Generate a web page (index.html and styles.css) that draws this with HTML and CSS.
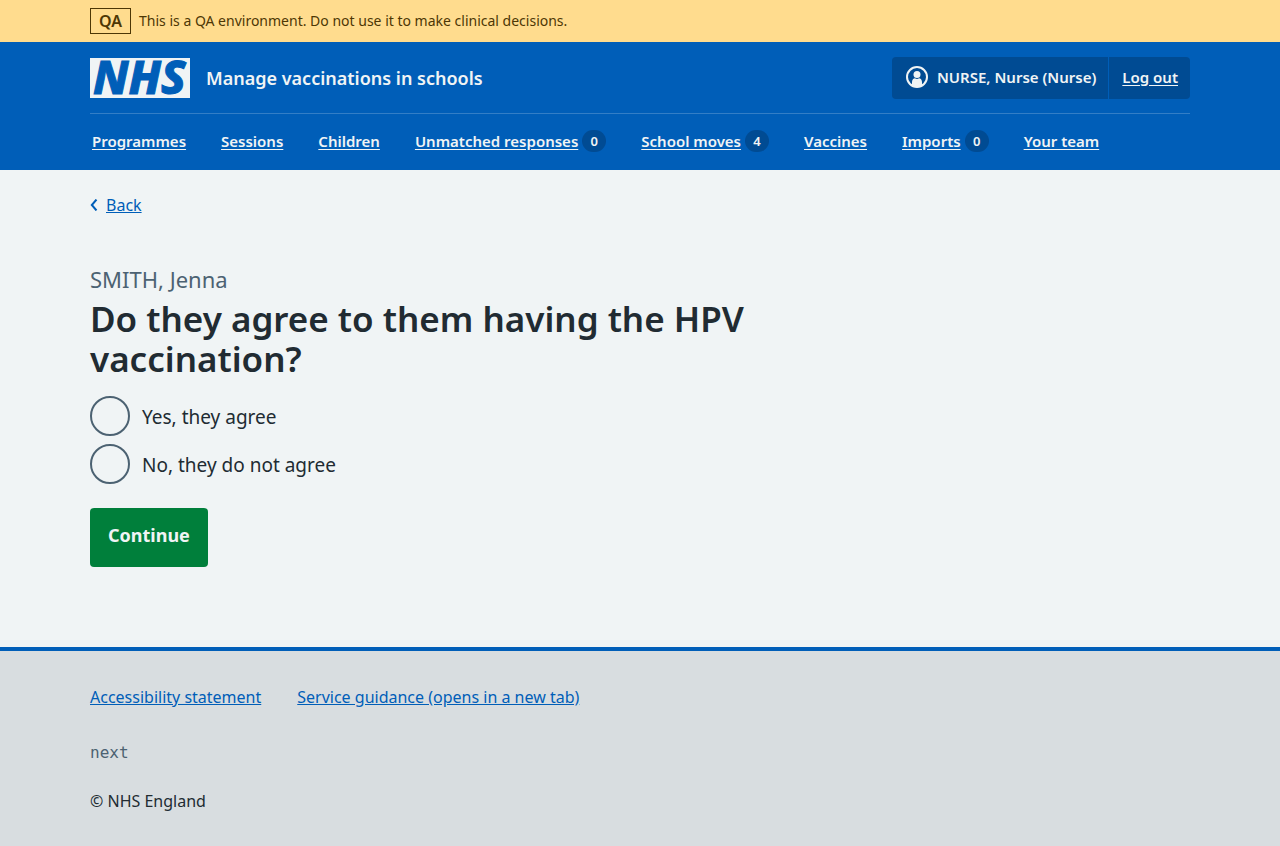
FILE: index.html
```html
<!DOCTYPE html>
<html lang="en">
<head>
<meta charset="utf-8">
<meta name="viewport" content="width=device-width, initial-scale=1">
<title>Do they agree to them having the HPV vaccination? – Manage vaccinations in schools</title>
<link rel="stylesheet" href="styles.css">
</head>
<body>
<div class="environment">
  <div class="container environment-inner">
    <strong class="environment-tag">QA</strong>
    <span>This is a QA environment. Do not use it to make clinical decisions.</span>
  </div>
</div>
<header class="header">
  <div class="container">
    <div class="header-top">
      <a class="service" href="#">
        <svg class="logo" viewBox="0 0 100 40" role="img" aria-label="NHS">
          <rect width="100" height="40" fill="#f0f4f5"/>
          <text class="logo-text" x="3" y="36">NHS</text>
        </svg>
        <span>Manage vaccinations in schools</span>
      </a>
      <div class="account">
        <div class="account-item">
          <svg class="account-icon" viewBox="0 0 24 24" aria-hidden="true">
            <circle cx="12" cy="12" r="10" fill="none" stroke="#f0f4f5" stroke-width="2"/>
            <circle cx="12" cy="9.500" r="3.500" fill="#f0f4f5"/>
            <path d="M7 20.500v-3.500c0-2.500 1.500-3.800 3-3.800 1 .900 3 .900 4 0 1.500 0 3 1.300 3 3.800v3.500c-3 1.700-7 1.700-10 0z" fill="#f0f4f5"/>
          </svg>
          <span>NURSE, Nurse (Nurse)</span>
        </div>
        <div class="account-item"><a href="#">Log out</a></div>
      </div>
    </div>
    <nav aria-label="Primary">
      <ul class="nav">
        <li><a href="#">Programmes</a></li>
        <li><a href="#">Sessions</a></li>
        <li><a href="#">Children</a></li>
        <li><a href="#">Unmatched responses</a><span class="count">0</span></li>
        <li><a href="#">School moves</a><span class="count">4</span></li>
        <li><a href="#">Vaccines</a></li>
        <li><a href="#">Imports</a><span class="count">0</span></li>
        <li><a href="#">Your team</a></li>
      </ul>
    </nav>
  </div>
</header>
<div class="container page">
  <a class="back" href="#">
    <svg class="back-icon" viewBox="0 0 8 12" aria-hidden="true"><path d="M6.500.500 1.800 6l4.700 5.500" fill="none" stroke="currentColor" stroke-width="2"/></svg>
    <span>Back</span>
  </a>
  <main>
    <form class="question">
      <fieldset>
        <legend>
          <span class="caption">SMITH, Jenna</span>
          <h1>Do they agree to them having the HPV vaccination?</h1>
        </legend>
        <div class="radios">
          <div class="radio"><input type="radio" name="agree" id="agree-yes"><label for="agree-yes">Yes, they agree</label></div>
          <div class="radio"><input type="radio" name="agree" id="agree-no"><label for="agree-no">No, they do not agree</label></div>
        </div>
      </fieldset>
      <button type="button" class="button">Continue</button>
    </form>
  </main>
</div>
<footer class="footer">
  <div class="container">
    <ul class="footer-links">
      <li><a href="#">Accessibility statement</a></li>
      <li><a href="#">Service guidance (opens in a new tab)</a></li>
    </ul>
    <p class="version">next</p>
    <p>© NHS England</p>
  </div>
</footer>
</body>
</html>
```
FILE: styles.css
```css
* { box-sizing: border-box; }
body {
  margin: 0;
  min-height: 100vh;
  display: flex;
  flex-direction: column;
  background: #f0f4f5;
  color: #212b32;
  font: 16px/24px "Noto Sans", "Open Sans", sans-serif;
}
ul, p, h1, fieldset, legend { margin: 0; padding: 0; border: 0; }
ul { list-style: none; }
.container { width: calc(100% - 32px); max-width: 1100px; margin: 0 auto; }

.environment { background: #ffdc8e; color: #4d3705; font-size: 14px; }
.environment-inner { display: flex; align-items: center; gap: 8px; padding: 8px 0; }
.environment-tag { border: 1px solid #4d3705; padding: 0 8px; font-size: 16px; font-weight: 600; }

.header { background: #005eb8; color: #f0f4f5; font-weight: 600; font-size: 15px; }
.header a { color: #f0f4f5; }
.header-top {
  display: flex;
  flex-wrap: wrap;
  align-items: center;
  justify-content: space-between;
  padding: 15px 0 14px;
  border-bottom: 1px solid #337ec6;
}
.service { display: flex; align-items: center; gap: 16px; font-size: 18px; text-decoration: none; }
.logo { width: 100px; height: 40px; overflow: visible; }
.logo-text {
  font: italic 800 46px "Noto Sans", sans-serif;
  fill: #005eb8;
  stroke: #005eb8;
  stroke-width: 1px;
}
.account { display: flex; background: #004b93; border-radius: 4px; }
.account-item { display: flex; align-items: center; gap: 8px; padding: 8px 12px 10px 13px; }
.account-item + .account-item { border-left: 1px solid #005eb8; }
.account-icon { width: 24px; height: 24px; }
.nav { display: flex; flex-wrap: wrap; gap: 0 35px; padding: 15px 2px 17px; }
.nav li { display: flex; align-items: center; gap: 4px; }
.header .nav a, .account a { text-underline-offset: 2px; }
.count {
  min-width: 24px;
  border-radius: 12px;
  background: #004b93;
  font-size: 13px;
  line-height: 22px;
  text-align: center;
}

.page { flex: 1 0 auto; padding: 23px 0 79px; }
.back { display: inline-flex; align-items: center; gap: 8px; color: #005eb8; text-decoration: none; }
.back span { text-decoration: underline; }
.back-icon { width: 8px; height: 12px; }
.question { max-width: 720px; padding-top: 46px; }
.caption { display: block; color: #4c6272; font-size: 22px; line-height: 32px; }
h1 { font-size: 35px; line-height: 40px; font-weight: 600; margin-top: 4px; }
.radios { display: grid; gap: 8px; margin: 17px 0 24px; }
.radio { display: flex; align-items: center; gap: 12px; font-size: 19px; }
.radio label { padding-top: 2px; }
.radio input {
  appearance: none;
  width: 40px;
  height: 40px;
  margin: 0;
  border: 2px solid #4c6272;
  border-radius: 50%;
}
.radio input:checked { background: radial-gradient(#212b32 0 10px, transparent 11px); }
.button {
  display: block;
  border: 0;
  border-radius: 4px;
  background: #007f3b;
  color: #f0f4f5;
  font: 700 18px/27px "Noto Sans", "Open Sans", sans-serif;
  padding: 14px 18px 18px;
}

.footer { background: #d8dde0; border-top: 4px solid #005eb8; padding: 34px 0 33px; }
.footer a { color: #005eb8; }
.footer-links { display: flex; flex-wrap: wrap; gap: 8px 36px; }
.footer p { margin-top: 24px; }
.footer .version { margin-top: 32px; color: #4c6272; font: 16px/24px "DejaVu Sans Mono", monospace; }
```
